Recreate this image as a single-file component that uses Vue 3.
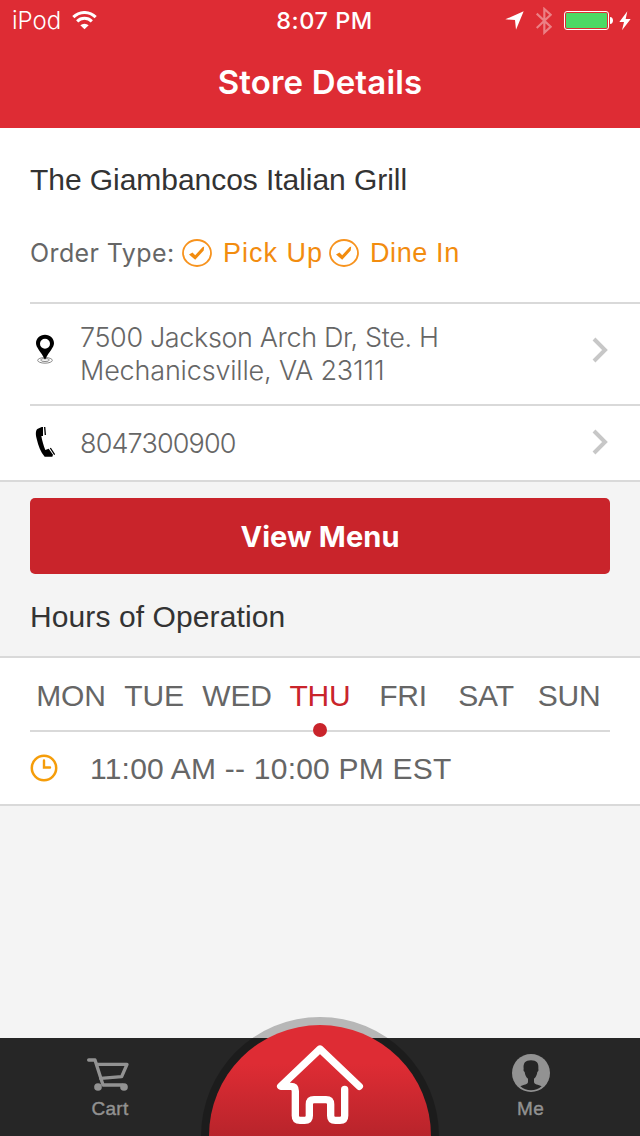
<script setup>
import { ref } from 'vue'

const orderTypes = ['Pick Up', 'Dine In']
const days = ['MON', 'TUE', 'WED', 'THU', 'FRI', 'SAT', 'SUN']
const activeDay = ref('THU')
</script>

<template>
  <div class="screen">
    <header class="header">
      <div class="status-bar">
        <div class="status-left">
          <span class="carrier">iPod</span>
          <svg class="wifi" width="25" height="19" viewBox="0 0 75 57">
            <g fill="none" stroke="#fff" stroke-width="9">
              <path d="M4 18.500a47 47 0 0 1 67 0" />
              <path d="M15.500 31a31 31 0 0 1 44 0" />
            </g>
            <path d="M37.500 55 25 43a18 18 0 0 1 25 0z" fill="#fff" />
          </svg>
        </div>
        <span class="clock">8:07 PM</span>
        <div class="status-right">
          <svg width="19" height="19" viewBox="0 0 57 57">
            <path d="M56 1 33 56 30 27 1 25z" fill="#fff" />
          </svg>
          <svg class="bluetooth" width="16" height="28" viewBox="0 0 48 84">
            <path d="M2 20 44 59 25 77V6L44 23 2 63" fill="none" stroke="#fff" stroke-width="6.500" />
          </svg>
          <svg class="battery" width="50" height="20" viewBox="0 0 50 20">
            <rect x="0.500" y="0.500" width="44" height="18" rx="2.500" fill="none" stroke="#fff" />
            <rect x="2" y="2" width="41" height="15" rx="1" fill="#4cd964" />
            <path d="M46 6c4 0 4 7 0 7z" fill="#fff" />
          </svg>
          <svg width="12" height="20" viewBox="0 0 36 60">
            <path d="M25 1 1 33h14L9 58 35 24H20z" fill="#fff" />
          </svg>
        </div>
      </div>
      <h1 class="page-title">Store Details</h1>
    </header>

    <main class="content">
      <section class="store">
        <h2 class="store-name">The Giambancos Italian Grill</h2>
        <div class="order-types">
          <span class="order-label">Order Type:</span>
          <span v-for="type in orderTypes" :key="type" class="order-type">
            <svg width="30" height="28" viewBox="0 0 30 28">
              <ellipse cx="15" cy="14" rx="14" ry="13" fill="none" stroke="#f7931e" stroke-width="1.800" />
              <path d="M7 15.500 10.500 13.500l2.700 2.700 7.300-8 1.700-.7-.5 4-8.500 9.300z" fill="#f28c0f" />
            </svg>
            <span class="order-text">{{ type }}</span>
          </span>
        </div>

        <div class="info-row info-row--address">
          <svg class="info-icon" width="20" height="30" viewBox="0 0 60 90">
            <g fill="none" stroke="#888" stroke-width="3">
              <ellipse cx="30" cy="79" rx="22" ry="8.500" />
              <ellipse cx="30" cy="78" rx="13" ry="4.500" />
            </g>
            <path fill-rule="evenodd" d="M30 2C14 2 3 13 3 28c0 13 14 24 27 49 13-25 27-36 27-49C57 13 46 2 30 2zm0 12a15 15 0 1 1 0 30 15 15 0 0 1 0-30z" />
          </svg>
          <p class="info-text">7500 Jackson Arch Dr, Ste. H<br><span class="city">Mechanicsville, VA 23111</span></p>
          <svg class="chevron" width="18" height="26" viewBox="0 0 18 26">
            <path d="M2 2 13 13 2 24" fill="none" stroke="#c7c7c7" stroke-width="4" />
          </svg>
        </div>
        <div class="info-row info-row--phone">
          <svg class="info-icon" width="20" height="32" viewBox="0 0 60 96">
            <path d="M20 3 7 9C1 15 2 27 5 38c5 22 12 40 24 54h23l2-6-13-18-10 4C26 60 21 43 19 30h5V3z" />
            <path d="M29 3l2 24M46 66l13 20" fill="none" stroke="#000" stroke-width="4" />
          </svg>
          <p class="info-text phone">8047300900</p>
          <svg class="chevron" width="18" height="26" viewBox="0 0 18 26">
            <path d="M2 2 13 13 2 24" fill="none" stroke="#c7c7c7" stroke-width="4" />
          </svg>
        </div>
      </section>

      <button class="menu-button" type="button">View Menu</button>

      <h2 class="hours-title">Hours of Operation</h2>
      <section class="hours">
        <div class="days">
          <span
            v-for="day in days"
            :key="day"
            class="day"
            :class="{ 'day--active': day === activeDay }"
            @click="activeDay = day"
          >
            {{ day }}
          </span>
        </div>
        <div class="time-row">
          <svg width="28" height="28" viewBox="0 0 28 28">
            <g fill="none" stroke="#f59d0a">
              <circle cx="14" cy="14" r="12.200" stroke-width="2.500" />
              <path d="M14 6.500V13.500h6" stroke-width="2.400" stroke-linecap="round" />
            </g>
          </svg>
          <span class="time">11:00 AM -- 10:00 PM EST</span>
        </div>
      </section>
    </main>

    <nav class="tab-bar">
      <div class="tab tab--cart">
        <svg class="cart-icon" width="42" height="34" viewBox="0 0 126 102">
          <g fill="none" stroke="#929292" stroke-width="10" stroke-linecap="round" stroke-linejoin="round">
            <path d="M5 6h19l24 75h58" />
            <path d="M30 19h90L104 56 41 61" />
          </g>
          <circle cx="33" cy="87" r="11.500" fill="#929292" />
          <circle cx="111" cy="87" r="11.500" fill="#929292" />
        </svg>
        <span class="tab-label">Cart</span>
      </div>
      <div class="tab tab--me">
        <svg width="38" height="38" viewBox="0 0 114 114">
          <circle cx="57" cy="57" r="57" fill="#929292" />
          <path d="M25 97c10-6 23-5 23-14v-9c-6-4-9-12-10-20-4-2-4-7-3-9-2-18 5-26 22-26s24 8 22 26c1 2 1 7-3 9-1 8-4 16-10 20v9c0 9 13 8 23 14-17 16-47 16-64 0z" fill="#262626" />
        </svg>
        <span class="tab-label">Me</span>
      </div>
      <div class="home">
        <div class="home-disc">
          <svg width="88" height="82" viewBox="258 132 264 246">
            <path
              d="M508 259 390 147 272 259h30q14 0 14 14v74q0 14 14 14h14q14 0 14-14v-34q0-14 14-14h36q14 0 14 14v34q0 14 14 14h14q14 0 14-14v-79"
              fill="none"
              stroke="#fff"
              stroke-width="22"
              stroke-linecap="round"
              stroke-linejoin="round"
            />
          </svg>
        </div>
      </div>
    </nav>
  </div>
</template>

<style>
body {
  margin: 0;
}
</style>

<style scoped>
.screen {
  display: flex;
  flex-direction: column;
  width: 640px;
  height: 1136px;
  overflow: hidden;
  background: #f4f4f4;
  font-family: "Liberation Sans", Arial, sans-serif;
  color: #333333;
}

.screen * {
  box-sizing: border-box;
}

h1,
h2,
p {
  margin: 0;
  font-weight: 400;
  white-space: nowrap;
}

svg {
  display: block;
  flex: none;
}

.header {
  height: 128px;
  background: #de2c34;
  color: #ffffff;
  font-family: Inter, sans-serif;
}

.status-bar {
  display: grid;
  grid-template-columns: 1fr auto 1fr;
  align-items: center;
  height: 41px;
  padding: 0 9px 0 12px;
}

.status-left,
.status-right {
  display: flex;
  align-items: center;
}

.status-right {
  justify-content: flex-end;
}

.carrier {
  font-size: 24px;
  font-weight: 300;
}

.wifi {
  margin-left: 11px;
}

.clock {
  padding-left: 6px;
  font-size: 23.5px;
  font-weight: 500;
  letter-spacing: 0.5px;
}

.bluetooth {
  margin-left: 12px;
  opacity: 0.4;
}

.battery {
  margin: 1px 5px 0 12px;
}

.page-title {
  padding-top: 19px;
  font-size: 33px;
  font-weight: 600;
  line-height: 44px;
  letter-spacing: 0.15px;
  text-align: center;
}

.content {
  flex: 1;
}

.store {
  height: 354px;
  padding-left: 30px;
  background: #ffffff;
  border-bottom: 2px solid #d9d9d9;
}

.store-name {
  padding-top: 35px;
  font-size: 30px;
  line-height: 34px;
  letter-spacing: -0.05px;
}

.order-types {
  display: flex;
  align-items: center;
  height: 105px;
  padding-top: 7px;
}

.order-label {
  width: 152px;
  font-family: Inter, sans-serif;
  font-size: 25px;
  letter-spacing: 0.4px;
  color: #666666;
  white-space: nowrap;
}

.order-type {
  display: flex;
  align-items: center;
  width: 147px;
  color: #f28c0f;
}

.order-text {
  margin-left: 11px;
  font-size: 27px;
  letter-spacing: 0.6px;
  white-space: nowrap;
}

.order-type:nth-of-type(2) .order-text {
  letter-spacing: 1px;
}

.info-row {
  display: flex;
  align-items: center;
  border-top: 2px solid #d9d9d9;
  padding: 0 30px 0 5px;
}

.info-row--address {
  height: 102px;
}

.info-row--phone {
  height: 76px;
}

.info-icon {
  margin-right: 25px;
}

.info-row--address .info-icon {
  margin-bottom: 10px;
}

.info-row--address .chevron {
  margin-bottom: 8px;
}

.info-row--phone .info-icon {
  margin-bottom: 3px;
}

.info-row--phone .chevron {
  margin-bottom: 2px;
}

.info-text {
  flex: 1;
  font-family: Inter, sans-serif;
  font-size: 27px;
  font-weight: 300;
  line-height: 33px;
  letter-spacing: -0.38px;
  color: #666666;
}

.city {
  letter-spacing: -0.18px;
}

.phone {
  letter-spacing: -0.85px;
}

.menu-button {
  display: block;
  width: 580px;
  height: 76px;
  margin: 16px 30px 0;
  padding: 0;
  border: 0;
  border-radius: 5px;
  background: #c9242b;
  color: #ffffff;
  font-family: Inter, sans-serif;
  font-size: 29px;
  font-weight: 700;
  letter-spacing: 0.1px;
}

.hours-title {
  height: 82px;
  padding: 26px 0 0 30px;
  font-size: 30px;
  line-height: 34px;
  letter-spacing: 0.1px;
}

.hours {
  height: 150px;
  padding: 0 30px;
  background: #ffffff;
  border-top: 2px solid #d9d9d9;
  border-bottom: 2px solid #d9d9d9;
  color: #666666;
}

.days {
  display: grid;
  grid-template-columns: repeat(7, 83px);
  grid-template-rows: 72px;
  justify-content: center;
  height: 74px;
  border-bottom: 2px solid #d9d9d9;
}

.day {
  position: relative;
  font-size: 30px;
  line-height: 76px;
  letter-spacing: -0.2px;
  text-align: center;
}

.day--active {
  color: #c9242b;
}

.day--active::after {
  content: '';
  position: absolute;
  left: 50%;
  bottom: -7px;
  width: 14px;
  height: 14px;
  margin-left: -7px;
  border-radius: 50%;
  background: #c9242b;
}

.time-row {
  display: flex;
  align-items: center;
  height: 72px;
}

.time {
  margin-left: 32px;
  padding-top: 1px;
  font-size: 30px;
  letter-spacing: 0.22px;
}

.tab-bar {
  position: relative;
  display: flex;
  justify-content: space-between;
  height: 98px;
  padding: 0 50px;
  background: #262626;
}

.tab {
  display: flex;
  flex-direction: column;
  align-items: center;
  width: 120px;
  color: #929292;
}

.tab--cart {
  padding-top: 20px;
}

.tab--me {
  padding: 16px 0 0 1px;
}

.cart-icon {
  margin-right: 4px;
}

.tab-label {
  margin-top: 6px;
  font-size: 19px;
  line-height: 22px;
  letter-spacing: 0.3px;
  -webkit-text-stroke: 0.4px #929292;
}

/* Home button overlaps the bar and the content above it */
.home {
  position: absolute;
  left: 201px;
  top: -21px;
  width: 238px;
  height: 119px;
  padding: 8px 8px 0;
  border-radius: 119px 119px 0 0;
  background: rgba(0, 0, 0, 0.25);
}

.home-disc {
  display: flex;
  justify-content: center;
  height: 111px;
  padding-top: 19px;
  border-radius: 111px 111px 0 0;
  background: linear-gradient(#de2c34 35%, #b8242b);
}
</style>
